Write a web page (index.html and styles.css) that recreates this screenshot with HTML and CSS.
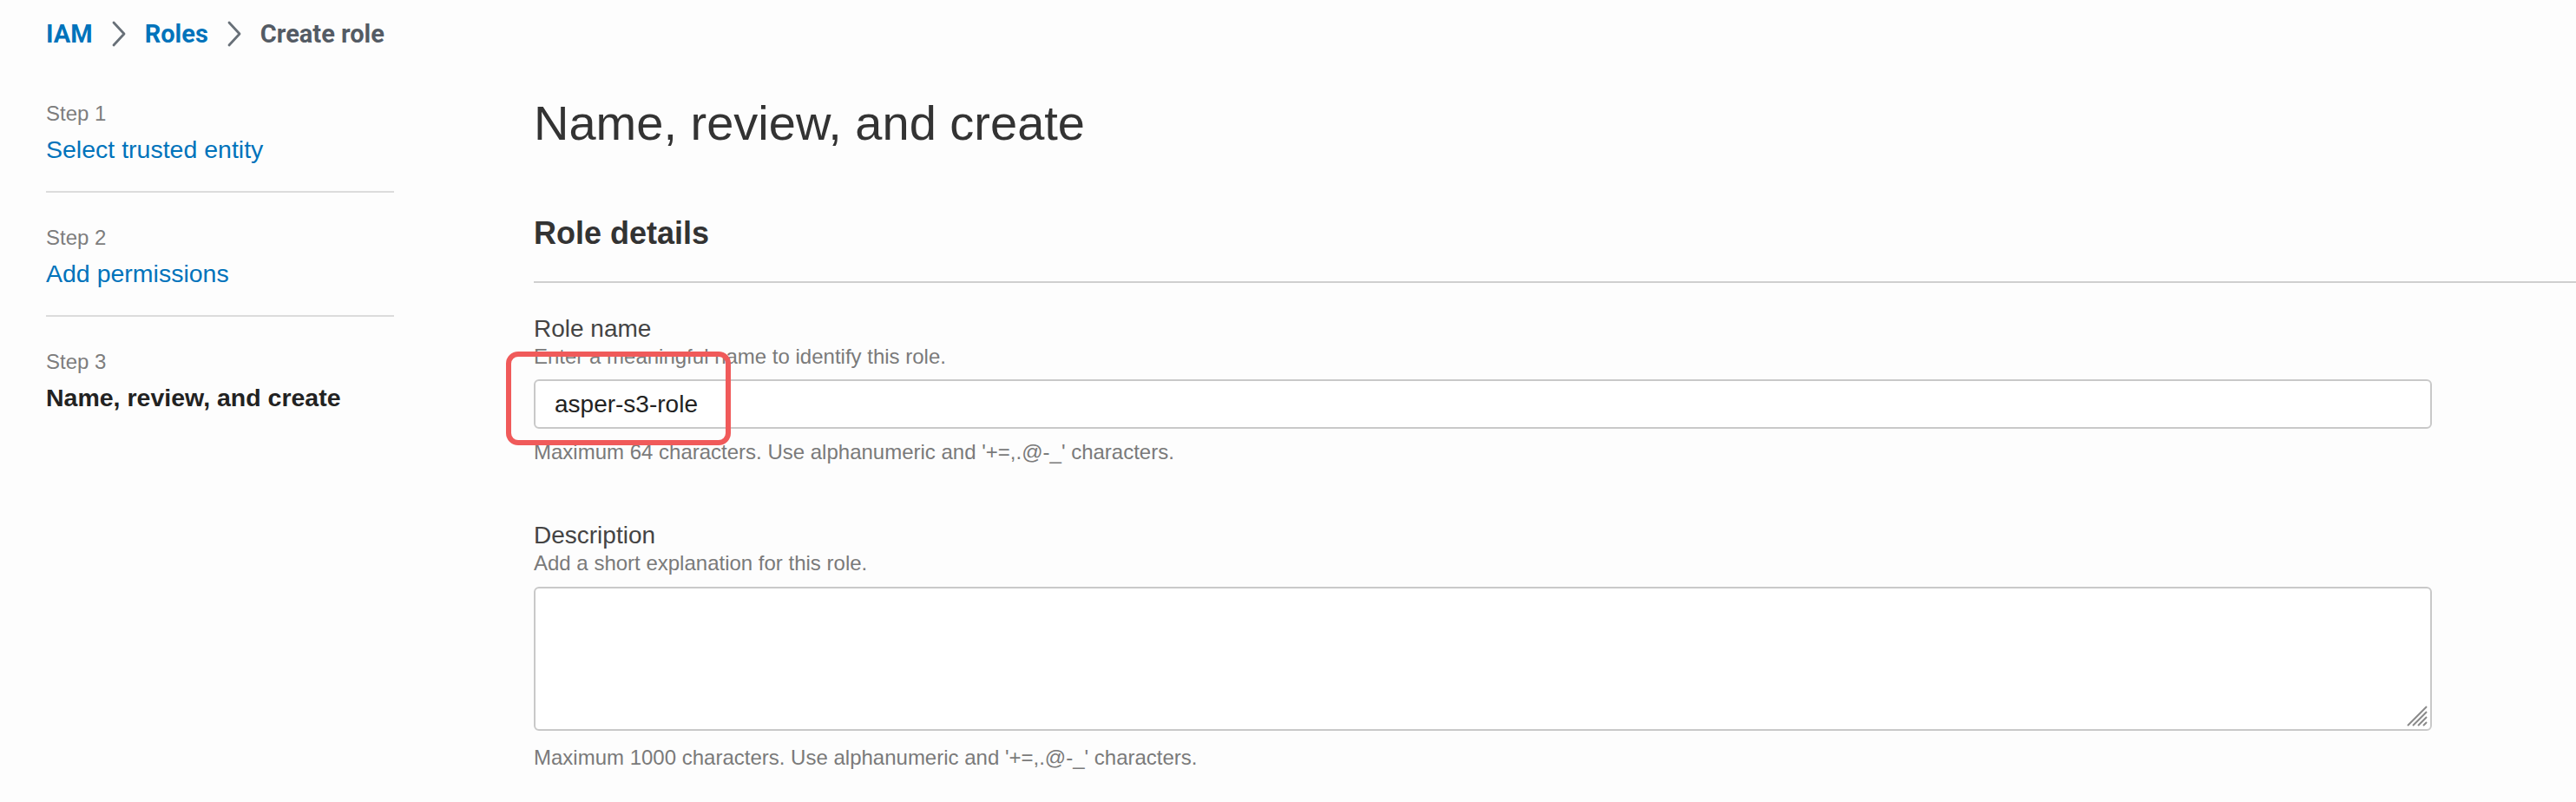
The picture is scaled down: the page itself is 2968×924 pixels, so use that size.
FILE: index.html
```html
<!DOCTYPE html>
<html lang="en">
<head>
<meta charset="utf-8">
<title>Create role</title>
<link rel="stylesheet" href="styles.css">
</head>
<body>
<nav class="crumbs">
  <a class="crumb link">IAM</a>
  <svg class="chev" viewBox="0 0 18 30" width="18" height="30"><path d="M3 2 L15 15 L3 28" fill="none" stroke="#687078" stroke-width="2.8" stroke-linecap="round" stroke-linejoin="round"/></svg>
  <a class="crumb link">Roles</a>
  <svg class="chev" viewBox="0 0 18 30" width="18" height="30"><path d="M3 2 L15 15 L3 28" fill="none" stroke="#687078" stroke-width="2.8" stroke-linecap="round" stroke-linejoin="round"/></svg>
  <span class="crumb current">Create role</span>
</nav>
<div class="layout">
  <aside class="steps">
    <div class="step">
      <div class="step-num">Step 1</div>
      <a class="step-name link">Select trusted entity</a>
    </div>
    <div class="step">
      <div class="step-num">Step 2</div>
      <a class="step-name link">Add permissions</a>
    </div>
    <div class="step last">
      <div class="step-num">Step 3</div>
      <div class="step-name active">Name, review, and create</div>
    </div>
  </aside>
  <main class="main">
    <h1 class="title">Name, review, and create</h1>
    <h2 class="section">Role details</h2>
    <div class="rule"></div>
    <div class="field">
      <div class="label">Role name</div>
      <div class="hint">Enter a meaningful name to identify this role.</div>
      <div class="input-wrap">
        <input class="input" type="text" value="asper-s3-role">
        <div class="highlight"></div>
      </div>
      <div class="constraint">Maximum 64 characters. Use alphanumeric and '+=,.@-_' characters.</div>
    </div>
    <div class="field desc">
      <div class="label">Description</div>
      <div class="hint">Add a short explanation for this role.</div>
      <div class="textarea-wrap">
        <textarea class="textarea"></textarea>
        <svg class="grip" viewBox="0 0 24 24" width="24" height="24">
          <g stroke="#8a8a8a" stroke-width="2" stroke-linecap="butt">
            <line x1="1" y1="23" x2="23" y2="1"/>
            <line x1="7" y1="23" x2="23" y2="7"/>
            <line x1="13" y1="23" x2="23" y2="13"/>
            <line x1="19" y1="23" x2="23" y2="19"/>
          </g>
        </svg>
      </div>
      <div class="constraint">Maximum 1000 characters. Use alphanumeric and '+=,.@-_' characters.</div>
    </div>
  </main>
</div>
</body>
</html>
```
FILE: styles.css
```css
html, body {
  margin: 0;
  padding: 0;
  background: #fdfdfd;
  font-family: "Liberation Sans", Arial, sans-serif;
  color: #16191f;
  overflow: hidden;
}

.link {
  color: #0073bb;
  text-decoration: none;
}

.crumbs {
  display: flex;
  align-items: center;
  padding: 22px 0 0 53px;
  height: 34px;
}

.crumb {
  font-family: Roboto, "Liberation Sans", sans-serif;
  font-weight: 700;
  font-size: 29px;
  line-height: 34px;
}

.crumb.current {
  color: #545b64;
}

.chev {
  margin: 0 21px 0 21px;
}

.layout {
  display: grid;
  grid-template-columns: 401px 1fr;
  column-gap: 161px;
  padding: 23px 0 0 53px;
}

.step {
  padding: 36px 0 28px;
  border-bottom: 2px solid #dcdcdc;
}

.step.last {
  border-bottom: none;
}

.step-num {
  font-size: 24px;
  line-height: 32px;
  color: #7d7d7d;
}

.step-name {
  display: block;
  margin-top: 5px;
  font-size: 28.5px;
  line-height: 40px;
}

.step-name.active {
  font-weight: 700;
  color: #222;
}

.main {
  min-width: 0;
}

.title {
  margin: 29px 0 0;
  font-size: 56px;
  line-height: 68px;
  font-weight: 400;
  color: #333;
}

.section {
  margin: 71px 0 0;
  font-size: 36px;
  line-height: 44px;
  font-weight: 700;
  color: #333;
}

.rule {
  margin-top: 33px;
  height: 2px;
  background: #cfcfcf;
}

.field {
  margin-top: 35px;
  width: 2187px;
}

.field.desc {
  margin-top: 64px;
}

.label {
  font-size: 28px;
  line-height: 36px;
  color: #444;
}

.hint {
  font-size: 24px;
  line-height: 28px;
  color: #7a7a7a;
}

.input-wrap {
  position: relative;
  margin-top: 12px;
}

.input {
  display: block;
  box-sizing: border-box;
  width: 100%;
  height: 57px;
  margin: 0;
  padding: 0 22px;
  border: 2px solid #c9c9c9;
  border-radius: 6px;
  background: #fff;
  font-family: "Liberation Sans", Arial, sans-serif;
  font-size: 28px;
  color: #222;
  outline: none;
}

.highlight {
  position: absolute;
  left: -32px;
  top: -32px;
  width: 259px;
  height: 108px;
  box-sizing: border-box;
  border: 6px solid #f05a5a;
  border-radius: 14px;
  pointer-events: none;
}

.constraint {
  margin-top: 13px;
  font-size: 24px;
  line-height: 28px;
  color: #7a7a7a;
}

.textarea-wrap {
  position: relative;
  margin-top: 13px;
}

.textarea {
  display: block;
  box-sizing: border-box;
  width: 100%;
  height: 166px;
  margin: 0;
  border: 2px solid #c9c9c9;
  border-radius: 6px;
  background: #fff;
  resize: none;
  outline: none;
}

.grip {
  position: absolute;
  right: 5px;
  bottom: 5px;
}

.desc .constraint {
  margin-top: 17px;
}
```
